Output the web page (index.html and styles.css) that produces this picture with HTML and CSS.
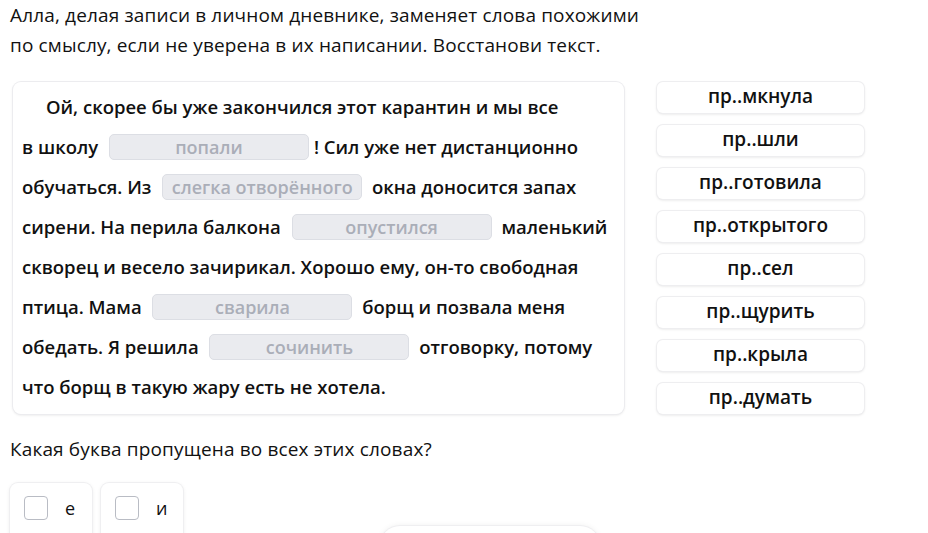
FILE: index.html
```html
<!DOCTYPE html>
<html lang="ru">
<head>
<meta charset="utf-8">
<link rel="stylesheet" href="styles.css">
</head>
<body>
<div class="page">
  <p class="intro">Алла, делая записи в личном дневнике, заменяет слова похожими<br>по смыслу, если не уверена в их написании. Восстанови текст.</p>
  <div class="task">
    <div class="card">
      <p class="story">Ой, скорее бы уже закончился этот карантин и мы все<br>в школу <span class="gap">попали</span>! Сил уже нет дистанционно<br>обучаться. Из <span class="gap">слегка отворённого</span> окна доносится запах<br>сирени. На перила балкона <span class="gap">опустился</span> маленький<br>скворец и весело зачирикал. Хорошо ему, он-то свободная<br>птица. Мама <span class="gap">сварила</span> борщ и позвала меня<br>обедать. Я решила <span class="gap">сочинить</span> отговорку, потому<br>что борщ в такую жару есть не хотела.</p>
    </div>
    <div class="words">
      <div class="word">пр..мкнула</div>
      <div class="word">пр..шли</div>
      <div class="word">пр..готовила</div>
      <div class="word">пр..открытого</div>
      <div class="word">пр..сел</div>
      <div class="word">пр..щурить</div>
      <div class="word">пр..крыла</div>
      <div class="word">пр..думать</div>
    </div>
  </div>
  <p class="question">Какая буква пропущена во всех этих словах?</p>
  <div class="options">
    <label class="option"><span class="box"></span><span class="letter">е</span></label>
    <label class="option"><span class="box"></span><span class="letter">и</span></label>
  </div>
  <div class="submit"></div>
</div>
</body>
</html>
```

FILE: styles.css
```css
html, body {
  margin: 0;
  padding: 0;
  background: #ffffff;
}
body {
  font-family: "Open Sans", "Noto Sans", sans-serif;
  color: #111111;
  overflow: hidden;
  height: 533px;
}
.page {
  padding: 0 0 0 10px;
  position: relative;
  height: 533px;
  overflow: hidden;
}
.intro {
  margin: 0;
  font-size: 19px;
  line-height: 30px;
  letter-spacing: 0.15px;
}
.task {
  display: flex;
  align-items: flex-start;
  gap: 33px;
  margin-top: 22px;
}
.card {
  margin-left: 3px;
  width: 611px;
  box-sizing: border-box;
  padding: 5px 10px 7px 9px;
  background: #fff;
  border-radius: 8px;
  box-shadow: 0 0 0 1px #ececef, 0 1px 3px rgba(0, 0, 0, 0.12);
}
.story {
  margin: 0;
  font-size: 18.5px;
  font-weight: 600;
  line-height: 40px;
  text-indent: 24px;
  white-space: nowrap;
}
.gap {
  display: inline-block;
  width: 200px;
  height: 26px;
  box-sizing: border-box;
  margin: 0 5px 0 6px;
  text-indent: 0;
  vertical-align: middle;
  background: #eaebef;
  border: 1px solid #dcdee4;
  border-radius: 5px;
  color: #aaaeb8;
  font-size: 18px;
  font-weight: 600;
  line-height: 24px;
  text-align: center;
  overflow: hidden;
  position: relative;
  top: -2px;
}
.words {
  display: flex;
  flex-direction: column;
  gap: 12px;
  width: 207px;
}
.word {
  height: 31px;
  box-sizing: border-box;
  background: #fff;
  border-radius: 6px;
  box-shadow: 0 0 0 1px #eeeef0, 0 1px 3px rgba(0, 0, 0, 0.14);
  font-size: 19px;
  font-weight: 600;
  line-height: 29px;
  text-align: center;
}
.question {
  margin: 20px 0 0;
  font-size: 19px;
  line-height: 30px;
  letter-spacing: 0.15px;
}
.options {
  display: flex;
  gap: 9px;
  margin-top: 19px;
}
.option {
  display: flex;
  align-items: center;
  width: 82px;
  height: 60px;
  box-sizing: border-box;
  padding: 0 0 10px 14px;
  background: #fff;
  border-radius: 8px;
  box-shadow: 0 0 0 1px #efeff1, 0 1px 4px rgba(0, 0, 0, 0.1);
}
.box {
  width: 24px;
  height: 24px;
  box-sizing: border-box;
  border: 1px solid #b9bcc4;
  border-radius: 4px;
}
.letter {
  margin-left: 17px;
  font-size: 18px;
}
.submit {
  position: absolute;
  left: 380px;
  top: 526px;
  width: 220px;
  height: 40px;
  border-radius: 20px;
  background: #fff;
  box-shadow: 0 0 0 1px #efeff1, 0 0 6px rgba(0, 0, 0, 0.08);
}
```
